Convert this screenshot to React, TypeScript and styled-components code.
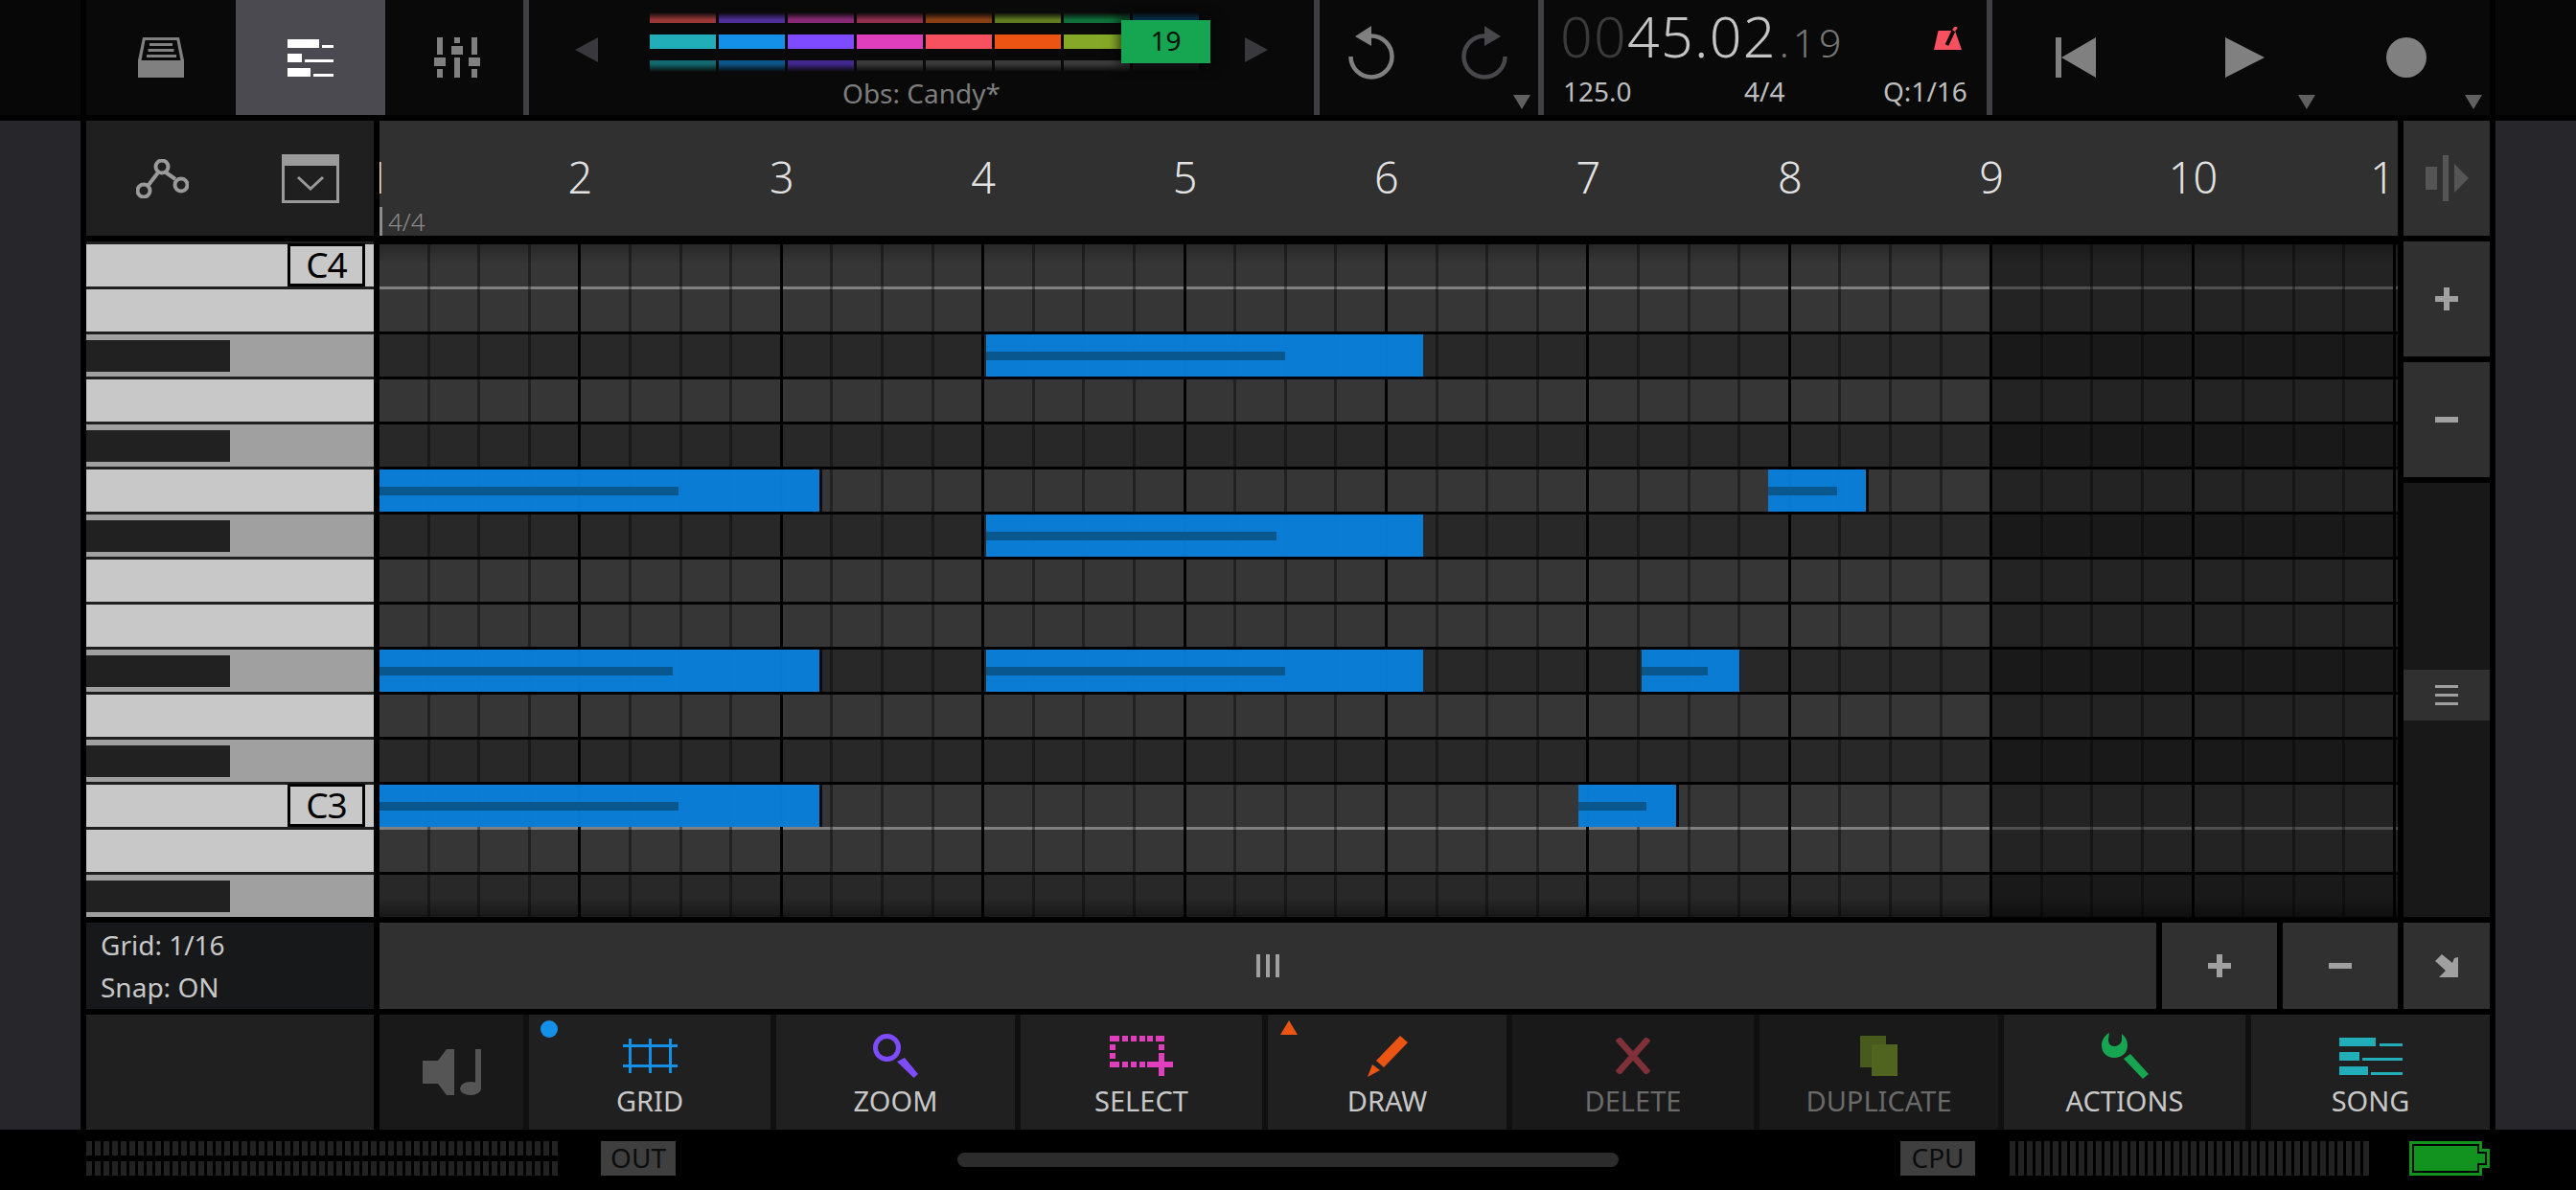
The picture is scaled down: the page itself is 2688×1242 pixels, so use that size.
import React from 'react';
import styled, { createGlobalStyle } from 'styled-components';

const GlobalStyle = createGlobalStyle`
    html, body {
        margin: 0;
        padding: 0;
        background: #000;
    }

    body {
        font-family: "Noto Sans", "Open Sans", sans-serif;
        color: #c8c8c8;
    }

    svg {
        display: block;
    }
`;

const BAR = 210.4;
const BEAT = BAR / 4;
const GRAY = '#808080';
const BLUE = '#1490e8';
const PURPLE = '#7f4bff';
const PINK = '#df3fbd';
const ORANGE = '#eb5412';
const GREEN = '#16a550';
const TEAL = '#21aeb8';

const Page = styled.div`
    width: 2688px;
    height: 1242px;
    background: #000;
    overflow: hidden;
`;

const Frame = styled.div`
    display: grid;
    grid-template-columns: 84px 2508px 84px;
    column-gap: 6px;
`;

const TopFrame = styled(Frame)`
    height: 120px;
    margin-bottom: 6px;
`;

const MidFrame = styled(Frame)`
    height: 1053px;
`;

const TopEdge = styled.div`
    background: #070707;
`;

const SideEdge = styled.div`
    background: #26262b;
`;

/* top bar */

const TopBar = styled.div`
    display: flex;
    height: 120px;
    background: #090909;
`;

const Section = styled.div<{ $width: number; $divider?: boolean }>`
    position: relative;
    box-sizing: border-box;
    width: ${p => p.$width}px;
    height: 120px;
    flex: none;
    border-right: ${p => (p.$divider ? '6px solid #3f3f44' : 'none')};
`;

const NavSection = styled(Section)`
    display: flex;
`;

const NavButton = styled.div<{ $width: number; $active?: boolean; $nudge?: number }>`
    width: ${p => p.$width}px;
    display: flex;
    align-items: center;
    justify-content: center;
    padding-left: ${p => p.$nudge || 0}px;
    box-sizing: border-box;
    background: ${p => (p.$active ? '#4a4a50' : 'transparent')};
`;

const PaletteSection = styled(Section)`
    display: flex;
    flex-direction: column;
    padding-top: 13px;
`;

const PaletteRow = styled.div`
    display: flex;
    align-items: flex-start;
    padding-left: 48px;
    height: 65px;
`;

const Arrow = styled.div<{ $right?: boolean }>`
    width: 0;
    height: 0;
    margin-top: 26px;
    border-top: 13.5px solid transparent;
    border-bottom: 13.5px solid transparent;
    ${p => (p.$right ? 'border-left: 24px solid #38383d;' : 'border-right: 24px solid #38383d;')}
`;

const Swatches = styled.div`
    position: relative;
    margin: 0 48px 0 54px;
    display: grid;
    grid-template-columns: repeat(8, 69px);
    grid-template-rows: 11px 15px 12px;
    gap: 12px 3px;
`;

const Swatch = styled.div<{ $color: string; $fade?: 'up' | 'down' }>`
    background: ${p =>
        p.$fade === 'up'
            ? `linear-gradient(to top, ${p.$color} 30%, transparent)`
            : p.$fade === 'down'
            ? `linear-gradient(to bottom, ${p.$color} 30%, transparent)`
            : p.$color};
`;

const ColorTag = styled.div`
    position: absolute;
    left: 492px;
    top: 8px;
    width: 93px;
    height: 45px;
    background: ${GREEN};
    color: #06120a;
    font-size: 28px;
    line-height: 42px;
    text-align: center;
    box-shadow: 0 0 10px 4px rgba(0, 0, 0, 0.55);
`;

const PatternName = styled.div`
    text-align: center;
    font-size: 28px;
    line-height: 38px;
    color: #7d7d7d;
`;

const HistorySection = styled(Section)`
    display: flex;
    gap: 70px;
    padding: 27px 0 0 30px;
`;

const DropMark = styled.div<{ $right: number }>`
    position: absolute;
    right: ${p => p.$right}px;
    bottom: 6px;
    width: 0;
    height: 0;
    border-left: 9px solid transparent;
    border-right: 9px solid transparent;
    border-top: 15px solid #606060;
`;

const TimeSection = styled(Section)`
    padding: 0 26px 0 20px;
`;

const TimeTop = styled.div`
    display: flex;
    justify-content: space-between;
    align-items: flex-start;
    height: 80px;
`;

const Clock = styled.div`
    margin-left: -3px;
    font-size: 59px;
    letter-spacing: 1.3px;
    line-height: 74px;
    font-weight: 300;
    color: #c4c4c4;
    white-space: nowrap;
`;

const ClockDim = styled.span`
    color: #3a3a3a;
`;

const ClockFrames = styled.span`
    margin-left: 3px;
    font-size: 41px;
    letter-spacing: 4px;
    color: #777;
`;

const MetronomeSlot = styled.div`
    margin-top: 28px;
`;

const TimeBottom = styled.div`
    display: grid;
    grid-template-columns: 189px 145px auto;
    font-size: 28px;
    line-height: 30px;
    color: #bdbdbd;
    white-space: nowrap;
`;

const TransportSection = styled(Section)`
    display: flex;
    align-items: flex-start;
    padding: 39px 0 0 66px;
`;

const TransportIcon = styled.div<{ $gap?: number }>`
    margin-left: ${p => p.$gap || 0}px;
`;

/* piano roll */

const Main = styled.div`
    display: grid;
    grid-template-columns: 300px 2106px 90px;
    grid-template-rows: 120px 705px 90px 120px;
    gap: 6px;
`;

const CornerPanel = styled.div`
    display: flex;
    align-items: center;
    justify-content: space-between;
    padding: 0 36px 0 52px;
    background: #1f1f1f;
`;

const Ruler = styled.div`
    position: relative;
    display: flex;
    overflow: hidden;
    background: #303030;
    padding-left: 1px;
`;

const BarNumber = styled.div<{ $first?: boolean }>`
    flex: none;
    width: ${BAR}px;
    margin-left: ${p => (p.$first ? -BAR / 2 - 2 : 0)}px;
    text-align: center;
    font-size: 45px;
    font-weight: 300;
    line-height: 118px;
    color: #e2e2e2;
`;

const Signature = styled.div`
    position: absolute;
    left: 0;
    bottom: 0;
    height: 30px;
    border-left: 3px solid #8a8a8a;
    padding-left: 6px;
    font-size: 26px;
    line-height: 30px;
    font-weight: 300;
    color: #8a8a8a;
`;

const SquareButton = styled.div`
    display: flex;
    align-items: center;
    justify-content: center;
    background: #303030;
`;

const Piano = styled.div`
    display: grid;
    grid-template-rows: repeat(15, 44px);
    row-gap: 3px;
    padding-top: 3px;
    background: #1f1f1f;
`;

const Key = styled.div<{ $black: boolean }>`
    display: flex;
    align-items: center;
    justify-content: ${p => (p.$black ? 'flex-start' : 'flex-end')};
    padding-right: ${p => (p.$black ? 0 : 9)}px;
    background: ${p => (p.$black ? '#a0a0a0' : '#c8c8c8')};
`;

const BlackKey = styled.div`
    width: 150px;
    height: 33px;
    background: #212121;
`;

const OctaveLabel = styled.div`
    box-sizing: border-box;
    width: 81px;
    height: 45px;
    margin-top: -1px;
    border: 3px solid #000;
    background: #c8c8c8;
    color: #000;
    font-size: 37px;
    letter-spacing: -1px;
    line-height: 38px;
    text-align: center;
`;

const NoteGrid = styled.div`
    position: relative;
    display: grid;
    grid-template-rows: repeat(15, 44px);
    row-gap: 3px;
    padding-top: 3px;
    background: #000;
    overflow: hidden;

    &::before,
    &::after {
        content: '';
        position: absolute;
        left: 0;
        right: 0;
        height: 20px;
        z-index: 2;
        pointer-events: none;
    }

    &::before {
        top: 3px;
        background: linear-gradient(to bottom, rgba(0, 0, 0, 0.28), transparent);
    }

    &::after {
        bottom: 0;
        background: linear-gradient(to top, rgba(0, 0, 0, 0.42), transparent);
    }
`;

const gridLines = `
    repeating-linear-gradient(90deg, transparent 0 ${BAR - 3}px, #000 ${BAR - 3}px ${BAR}px),
    repeating-linear-gradient(90deg, transparent 0 ${BEAT - 3}px, rgba(0, 0, 0, 0.38) ${BEAT - 3}px ${BEAT}px)
`;

const zone = (inside: string, outside: string) =>
    `linear-gradient(90deg, ${inside} 0 ${BAR * 8}px, ${outside} ${BAR * 8}px 100%)`;

const GridRow = styled.div<{ $black: boolean; $octave: boolean }>`
    position: relative;
    background: ${gridLines}, ${p => (p.$black ? zone('#282828', '#191919') : zone('#363636', '#232323'))};

    ${p =>
        p.$octave &&
        `
        &::after {
            content: '';
            position: absolute;
            left: 0;
            right: 0;
            top: 100%;
            height: 3px;
            background: ${gridLines}, ${zone('#808080', '#4f4f4f')};
        }
    `}
`;

const NoteBlock = styled.div<{ $left: number; $width: number; $edge?: boolean }>`
    position: absolute;
    top: 0;
    bottom: 0;
    left: ${p => p.$left}px;
    width: ${p => p.$width}px;
    display: flex;
    align-items: center;
    background: rgba(10, 129, 221, 0.95);
    box-shadow: ${p => (p.$edge ? '3px 0 0 #0a0a0a' : 'none')};
`;

const Velocity = styled.div<{ $width: number }>`
    width: ${p => p.$width}px;
    height: 9px;
    background: #08588f;
`;

const SideColumn = styled.div`
    display: grid;
    grid-template-rows: 120px 120px 1fr;
    gap: 6px;
`;

const ScrollTrack = styled.div`
    display: flex;
    flex-direction: column;
    background: #181818;
    padding-top: 195px;
`;

const ScrollThumb = styled.div`
    height: 53px;
    display: flex;
    flex-direction: column;
    align-items: center;
    justify-content: center;
    gap: 6px;
    background: #303030;
`;

const ThumbLine = styled.div`
    width: 24px;
    height: 3px;
    background: #a0a0a0;
`;

const GridInfo = styled.div`
    padding-left: 15px;
    background: #17181a;
    font-size: 28px;
    line-height: 44px;
    color: #c8c8c8;
    padding-top: 1px;
`;

const ScrollRow = styled.div`
    display: flex;
    gap: 6px;
`;

const Scroller = styled.div`
    flex: 1;
    display: flex;
    align-items: center;
    justify-content: center;
    gap: 6px;
    background: #303030;
`;

const GripLine = styled.div`
    width: 4px;
    height: 24px;
    background: #a0a0a0;
`;

const ZoomButton = styled(SquareButton)`
    width: 120px;
`;

/* bottom toolbar */

const EmptyPanel = styled.div`
    background: #202020;
`;

const Toolbar = styled.div`
    grid-column: 2 / 4;
    display: grid;
    grid-template-columns: 150px 252px 249px 252px 249px 252px 249px 252px 249px;
    gap: 6px;
    background: #101010;
`;

const MutePanel = styled.div`
    display: flex;
    align-items: center;
    justify-content: center;
    background: #191919;
`;

const Tool = styled.div<{ $disabled?: boolean }>`
    position: relative;
    display: flex;
    flex-direction: column;
    align-items: center;
    padding-top: 15px;
    background: ${p => (p.$disabled ? '#191919' : '#202020')};
    color: ${p => (p.$disabled ? '#6a6a6a' : '#c8c8c8')};
`;

const ToolIcon = styled.div`
    height: 56px;
    display: flex;
    align-items: center;
    justify-content: center;
`;

const ToolLabel = styled.div`
    font-size: 29px;
    line-height: 38px;
`;

const ActiveDot = styled.div`
    position: absolute;
    left: 12px;
    top: 6px;
    width: 18px;
    height: 18px;
    border-radius: 50%;
    background: ${BLUE};
`;

const ModeMark = styled.div`
    position: absolute;
    left: 13px;
    top: 6px;
    width: 0;
    height: 0;
    border-left: 9.5px solid transparent;
    border-right: 9.5px solid transparent;
    border-bottom: 15px solid ${ORANGE};
`;

/* status line */

const StatusBar = styled.div`
    display: flex;
    align-items: flex-start;
    height: 63px;
    padding: 12px 0 0 90px;
    box-sizing: border-box;
`;

const OutMeters = styled.div`
    display: flex;
    flex-direction: column;
    gap: 6px;
`;

const Meter = styled.div<{ $width: number; $height: number; $gap?: number }>`
    width: ${p => p.$width}px;
    height: ${p => p.$height}px;
    margin-left: ${p => p.$gap || 0}px;
    background: repeating-linear-gradient(90deg, #222 0 6px, transparent 6px 9px);
`;

const StatusTag = styled.div<{ $gap: number }>`
    width: 78px;
    height: 36px;
    margin-left: ${p => p.$gap}px;
    background: #3f3f3f;
    color: #0c0c0c;
    font-size: 28px;
    line-height: 35px;
    text-align: center;
`;

const HomeIndicator = styled.div`
    width: 690px;
    height: 15px;
    margin: 12px 0 0 294px;
    border-radius: 8px;
    background: #2c2c2c;
`;

const BatterySlot = styled.div`
    margin-left: 42px;
`;

/* icons */

const ArchiveIcon = () => (
    <svg width="48" height="42" viewBox="0 0 48 42">
        <path d="M5 0H43L48 24V42H0V24Z" fill={GRAY} />
        <path d="M7.5 3H40.5L44.5 24H3.5Z" fill="#090909" />
        <rect x="12" y="6" width="24" height="3" fill={GRAY} />
        <rect x="10.5" y="12" width="27" height="3" fill={GRAY} />
        <rect x="9" y="18" width="31" height="3" fill={GRAY} />
    </svg>
);

const TrackBars = ({ color, width, rows }: { color: string; width: number; rows: number[][] }) => (
    <svg width={width} height="39" viewBox={`0 0 ${width} 39`} fill={color}>
        {rows.map(([big, smallStart], i) => (
            <g key={i}>
                <rect x="0" y={i * 15} width={big} height="9" />
                <rect x={smallStart} y={i * 15 + 6} width={width - smallStart} height="3" />
            </g>
        ))}
    </svg>
);

const MixerIcon = () => (
    <svg width="48" height="42" viewBox="0 0 48 42" fill={GRAY}>
        <rect x="3" y="0" width="6" height="18" />
        <rect x="0" y="21" width="12" height="9" />
        <rect x="3" y="33" width="6" height="9" />
        <rect x="21" y="0" width="6" height="6" />
        <rect x="18" y="9" width="12" height="9" />
        <rect x="21" y="21" width="6" height="21" />
        <rect x="39" y="0" width="6" height="18" />
        <rect x="36" y="21" width="12" height="9" />
        <rect x="39" y="33" width="6" height="9" />
    </svg>
);

const HistoryIcon = ({ color, flip }: { color: string; flip?: boolean }) => (
    <svg width="48" height="56" viewBox="0 0 48 56" style={flip ? { transform: 'scaleX(-1)' } : undefined}>
        <path d="M24 10.5A21.5 21.5 0 1 1 2.5 32" fill="none" stroke={color} strokeWidth="4.5" />
        <path d="M24 0L7 11L24 21Z" fill={color} />
    </svg>
);

const MetronomeIcon = () => (
    <svg width="29" height="24" viewBox="0 0 29 24">
        <path d="M4.5 4H22L29 24H0Z" fill="#f7505f" />
        <path d="M13.5 19L20.5 4" stroke="#090909" strokeWidth="4" />
        <path d="M20.5 4L23.5 0" stroke="#f7505f" strokeWidth="3.5" />
    </svg>
);

const NodesIcon = () => (
    <svg width="55" height="41" viewBox="0 0 55 41" fill="none" stroke="#9a9a9a" strokeWidth="4">
        <path d="M23 14L13 27M31 14L41 21" />
        <circle cx="27" cy="8" r="6.5" />
        <circle cx="8" cy="33" r="6.5" />
        <circle cx="47" cy="27" r="6.5" />
    </svg>
);

const ClipIcon = () => (
    <svg width="60" height="51" viewBox="0 0 60 51">
        <rect x="1.5" y="1.5" width="57" height="48" fill="none" stroke="#9a9a9a" strokeWidth="3" />
        <rect x="0" y="0" width="60" height="12" fill="#9a9a9a" />
        <path d="M17 24L30 36L43 24" fill="none" stroke="#9a9a9a" strokeWidth="3" />
    </svg>
);

const FoldIcon = () => (
    <svg width="45" height="48" viewBox="0 0 45 48" fill="#555">
        <rect x="0" y="12" width="12" height="24" />
        <rect x="18" y="0" width="6" height="48" />
        <path d="M30 9L45 24L30 39Z" />
    </svg>
);

const PlusIcon = () => (
    <svg width="24" height="24" viewBox="0 0 24 24" fill="#a0a0a0">
        <rect x="9" y="0" width="6" height="24" />
        <rect x="0" y="9" width="24" height="6" />
    </svg>
);

const MinusIcon = () => (
    <svg width="24" height="6" viewBox="0 0 24 6" fill="#a0a0a0">
        <rect x="0" y="0" width="24" height="6" />
    </svg>
);

const CornerIcon = () => (
    <svg width="24" height="24" viewBox="0 0 24 24" fill="#a0a0a0">
        <path d="M7 0L18 9L20 4L24 3V24H4L11 17L0 7Z" />
    </svg>
);

const SpeakerNoteIcon = () => (
    <svg width="61" height="48" viewBox="0 0 61 48" fill="#555">
        <path d="M0 12H16L25 0H33V48H25L16 36H0Z" />
        <rect x="55" y="0" width="6" height="42" />
        <ellipse cx="50" cy="41" rx="11" ry="7" />
    </svg>
);

const GridIcon = () => (
    <svg width="57" height="36" viewBox="0 0 57 36" fill={BLUE}>
        <rect x="0" y="6" width="57" height="3" />
        <rect x="0" y="27" width="57" height="3" />
        <rect x="6" y="0" width="3" height="36" />
        <rect x="27" y="0" width="3" height="36" />
        <rect x="48" y="0" width="3" height="36" />
    </svg>
);

const MagnifierIcon = () => (
    <svg width="47" height="46" viewBox="0 0 47 46">
        <circle cx="14.5" cy="14.5" r="12" fill="none" stroke={PURPLE} strokeWidth="5" />
        <path d="M25 29L33 25L47 42L42.5 46Z" fill={PURPLE} />
    </svg>
);

const SELECT_RECTS = [
    [0, 0, 10, 6], [13, 0, 6, 6], [22, 0, 6, 6], [31, 0, 6, 6], [39, 0, 6, 6], [48, 0, 9, 6],
    [0, 9, 6, 6], [0, 18, 6, 6], [51, 9, 6, 6],
    [0, 27, 10, 6], [13, 27, 6, 6], [22, 27, 6, 6], [31, 27, 6, 6],
    [39, 27, 27, 6], [51, 18, 6, 24],
];

const SelectIcon = () => (
    <svg width="66" height="42" viewBox="0 0 66 42" fill={PINK}>
        {SELECT_RECTS.map(([x, y, w, h]) => (
            <rect key={`${x}-${y}`} x={x} y={y} width={w} height={h} />
        ))}
    </svg>
);

const PencilIcon = () => (
    <svg width="42" height="43" viewBox="0 0 42 43" fill={ORANGE}>
        <path d="M34 0L42 7L17 33L9 26Z" />
        <path d="M5 30L13 36L0 43Z" />
    </svg>
);

const CrossIcon = () => (
    <svg width="38" height="38" viewBox="0 0 38 38" fill="none" stroke="#803038" strokeWidth="6.5">
        <path d="M3 1L35 37M35 1L3 37" />
    </svg>
);

const DuplicateIcon = () => (
    <svg width="39" height="42" viewBox="0 0 39 42">
        <rect x="0" y="0" width="27" height="33" fill="#485a1c" />
        <rect x="12" y="9" width="27" height="33" fill="#506420" />
    </svg>
);

const WrenchIcon = () => (
    <svg width="49" height="48" viewBox="0 0 49 48" fill={GREEN}>
        <path d="M8 0C2 3 0 9 0 13C0 21 6 26 13 26C21 26 27 21 27 13C27 8 25 4 21 1L21 8C20 12 16 14 13 14C9 14 7 11 7 7Z" />
        <path d="M23 27L30 22L49 43L43 48Z" />
    </svg>
);

const BatteryIcon = () => (
    <svg width="84" height="36" viewBox="0 0 84 36">
        <path d="M1.5 1.5H74.5V9.5H82.5V26.5H74.5V34.5H1.5Z" fill="none" stroke="#12921f" strokeWidth="3" />
        <path d="M5 5H71V13H79V23H71V31H5Z" fill="#12921f" />
    </svg>
);

/* data */

const TOP_COLORS = ['#9b3838', '#4e2f9a', '#8a2a77', '#8f2f4c', '#8a3f14', '#5f7a20', '#0f6e3a', '#0b4a78'];
const MID_COLORS = [TEAL, BLUE, PURPLE, '#df3fbd', '#f7505f', ORANGE, '#85a829', GREEN];
const LOW_COLORS = ['#126a70', '#0b5588', '#43288f', '#3a3a3a', '#3a3a3a', '#3a3a3a', '#3a3a3a', '#1c1c1c'];

const KEYS = 'wwbwbwbwwbwbwwb'.split('');
const OCTAVES: Record<number, string> = { 0: 'C4', 12: 'C3' };

// note positions in px from the left of the grid
const NOTES: Record<number, { left: number; width: number; velocity: number; edge?: boolean }[]> = {
    2: [{ left: 633, width: 456, velocity: 312 }],
    5: [
        { left: 0, width: 459, velocity: 312, edge: true },
        { left: 1449, width: 102, velocity: 72, edge: true },
    ],
    6: [{ left: 633, width: 456, velocity: 303 }],
    9: [
        { left: 0, width: 459, velocity: 306, edge: true },
        { left: 633, width: 456, velocity: 312 },
        { left: 1317, width: 102, velocity: 69 },
    ],
    12: [
        { left: 0, width: 459, velocity: 312, edge: true },
        { left: 1251, width: 102, velocity: 71, edge: true },
    ],
};

const BARS = [1, 2, 3, 4, 5, 6, 7, 8, 9, 10, 11];

const TOOLS = [
    { label: 'GRID', icon: <GridIcon />, mark: <ActiveDot /> },
    { label: 'ZOOM', icon: <MagnifierIcon /> },
    { label: 'SELECT', icon: <SelectIcon /> },
    { label: 'DRAW', icon: <PencilIcon />, mark: <ModeMark /> },
    { label: 'DELETE', icon: <CrossIcon />, disabled: true },
    { label: 'DUPLICATE', icon: <DuplicateIcon />, disabled: true },
    { label: 'ACTIONS', icon: <WrenchIcon /> },
    {
        label: 'SONG',
        icon: <TrackBars color={TEAL} width={66} rows={[[38, 42], [21, 24], [30, 33]]} />,
    },
];

export default function App() {
    return (
        <Page>
            <GlobalStyle />

            <TopFrame>
                <TopEdge />
                <TopBar>
                    <NavSection $width={462} $divider>
                        <NavButton $width={156}>
                            <ArchiveIcon />
                        </NavButton>
                        <NavButton $width={156} $active>
                            <TrackBars color="#fff" width={48} rows={[[33, 36], [15, 18], [24, 27]]} />
                        </NavButton>
                        <NavButton $width={144} $nudge={6}>
                            <MixerIcon />
                        </NavButton>
                    </NavSection>

                    <PaletteSection $width={825} $divider>
                        <PaletteRow>
                            <Arrow />
                            <Swatches>
                                {TOP_COLORS.map((c, i) => (
                                    <Swatch key={`t${i}`} $color={c} $fade="up" />
                                ))}
                                {MID_COLORS.map((c, i) => (
                                    <Swatch key={`m${i}`} $color={c} />
                                ))}
                                {LOW_COLORS.map((c, i) => (
                                    <Swatch key={`l${i}`} $color={c} $fade="down" />
                                ))}
                                <ColorTag>19</ColorTag>
                            </Swatches>
                            <Arrow $right />
                        </PaletteRow>
                        <PatternName>Obs: Candy*</PatternName>
                    </PaletteSection>

                    <HistorySection $width={234} $divider>
                        <HistoryIcon color={GRAY} />
                        <HistoryIcon color="#48484c" flip />
                        <DropMark $right={8} />
                    </HistorySection>

                    <TimeSection $width={468} $divider>
                        <TimeTop>
                            <Clock>
                                <ClockDim>00</ClockDim>45.02<ClockFrames>.19</ClockFrames>
                            </Clock>
                            <MetronomeSlot>
                                <MetronomeIcon />
                            </MetronomeSlot>
                        </TimeTop>
                        <TimeBottom>
                            <span>125.0</span>
                            <span>4/4</span>
                            <span>Q:1/16</span>
                        </TimeBottom>
                    </TimeSection>

                    <TransportSection $width={519}>
                        <TransportIcon>
                            <svg width="42" height="42" viewBox="0 0 42 42" fill={GRAY}>
                                <rect x="0" y="0" width="6" height="42" />
                                <path d="M42 0V42L6 21Z" />
                            </svg>
                        </TransportIcon>
                        <TransportIcon $gap={135}>
                            <svg width="41" height="42" viewBox="0 0 41 42" fill={GRAY}>
                                <path d="M0 0L41 21L0 42Z" />
                            </svg>
                        </TransportIcon>
                        <TransportIcon $gap={127}>
                            <svg width="42" height="42" viewBox="0 0 42 42" fill={GRAY}>
                                <circle cx="21" cy="21" r="21" />
                            </svg>
                        </TransportIcon>
                        <DropMark $right={182} />
                        <DropMark $right={8} />
                    </TransportSection>
                </TopBar>
                <TopEdge />
            </TopFrame>

            <MidFrame>
                <SideEdge />
                <Main>
                    <CornerPanel>
                        <NodesIcon />
                        <ClipIcon />
                    </CornerPanel>
                    <Ruler>
                        {BARS.map((n, i) => (
                            <BarNumber key={n} $first={i === 0}>
                                {n}
                            </BarNumber>
                        ))}
                        <Signature>4/4</Signature>
                    </Ruler>
                    <SquareButton>
                        <FoldIcon />
                    </SquareButton>

                    <Piano>
                        {KEYS.map((k, i) => (
                            <Key key={i} $black={k === 'b'}>
                                {k === 'b' && <BlackKey />}
                                {OCTAVES[i] && <OctaveLabel>{OCTAVES[i]}</OctaveLabel>}
                            </Key>
                        ))}
                    </Piano>
                    <NoteGrid>
                        {KEYS.map((k, i) => (
                            <GridRow key={i} $black={k === 'b'} $octave={Boolean(OCTAVES[i])}>
                                {(NOTES[i] || []).map(n => (
                                    <NoteBlock key={n.left} $left={n.left} $width={n.width} $edge={n.edge}>
                                        <Velocity $width={n.velocity} />
                                    </NoteBlock>
                                ))}
                            </GridRow>
                        ))}
                    </NoteGrid>
                    <SideColumn>
                        <SquareButton>
                            <PlusIcon />
                        </SquareButton>
                        <SquareButton>
                            <MinusIcon />
                        </SquareButton>
                        <ScrollTrack>
                            <ScrollThumb>
                                <ThumbLine />
                                <ThumbLine />
                                <ThumbLine />
                            </ScrollThumb>
                        </ScrollTrack>
                    </SideColumn>

                    <GridInfo>
                        Grid: 1/16
                        <br />
                        Snap: ON
                    </GridInfo>
                    <ScrollRow>
                        <Scroller>
                            <GripLine />
                            <GripLine />
                            <GripLine />
                        </Scroller>
                        <ZoomButton>
                            <PlusIcon />
                        </ZoomButton>
                        <ZoomButton>
                            <MinusIcon />
                        </ZoomButton>
                    </ScrollRow>
                    <SquareButton>
                        <CornerIcon />
                    </SquareButton>

                    <EmptyPanel />
                    <Toolbar>
                        <MutePanel>
                            <SpeakerNoteIcon />
                        </MutePanel>
                        {TOOLS.map(t => (
                            <Tool key={t.label} $disabled={t.disabled}>
                                {t.mark}
                                <ToolIcon>{t.icon}</ToolIcon>
                                <ToolLabel>{t.label}</ToolLabel>
                            </Tool>
                        ))}
                    </Toolbar>
                </Main>
                <SideEdge />
            </MidFrame>

            <StatusBar>
                <OutMeters>
                    <Meter $width={492} $height={15} />
                    <Meter $width={492} $height={15} />
                </OutMeters>
                <StatusTag $gap={45}>OUT</StatusTag>
                <HomeIndicator />
                <StatusTag $gap={294}>CPU</StatusTag>
                <Meter $width={375} $height={36} $gap={36} />
                <BatterySlot>
                    <BatteryIcon />
                </BatterySlot>
            </StatusBar>
        </Page>
    );
}
